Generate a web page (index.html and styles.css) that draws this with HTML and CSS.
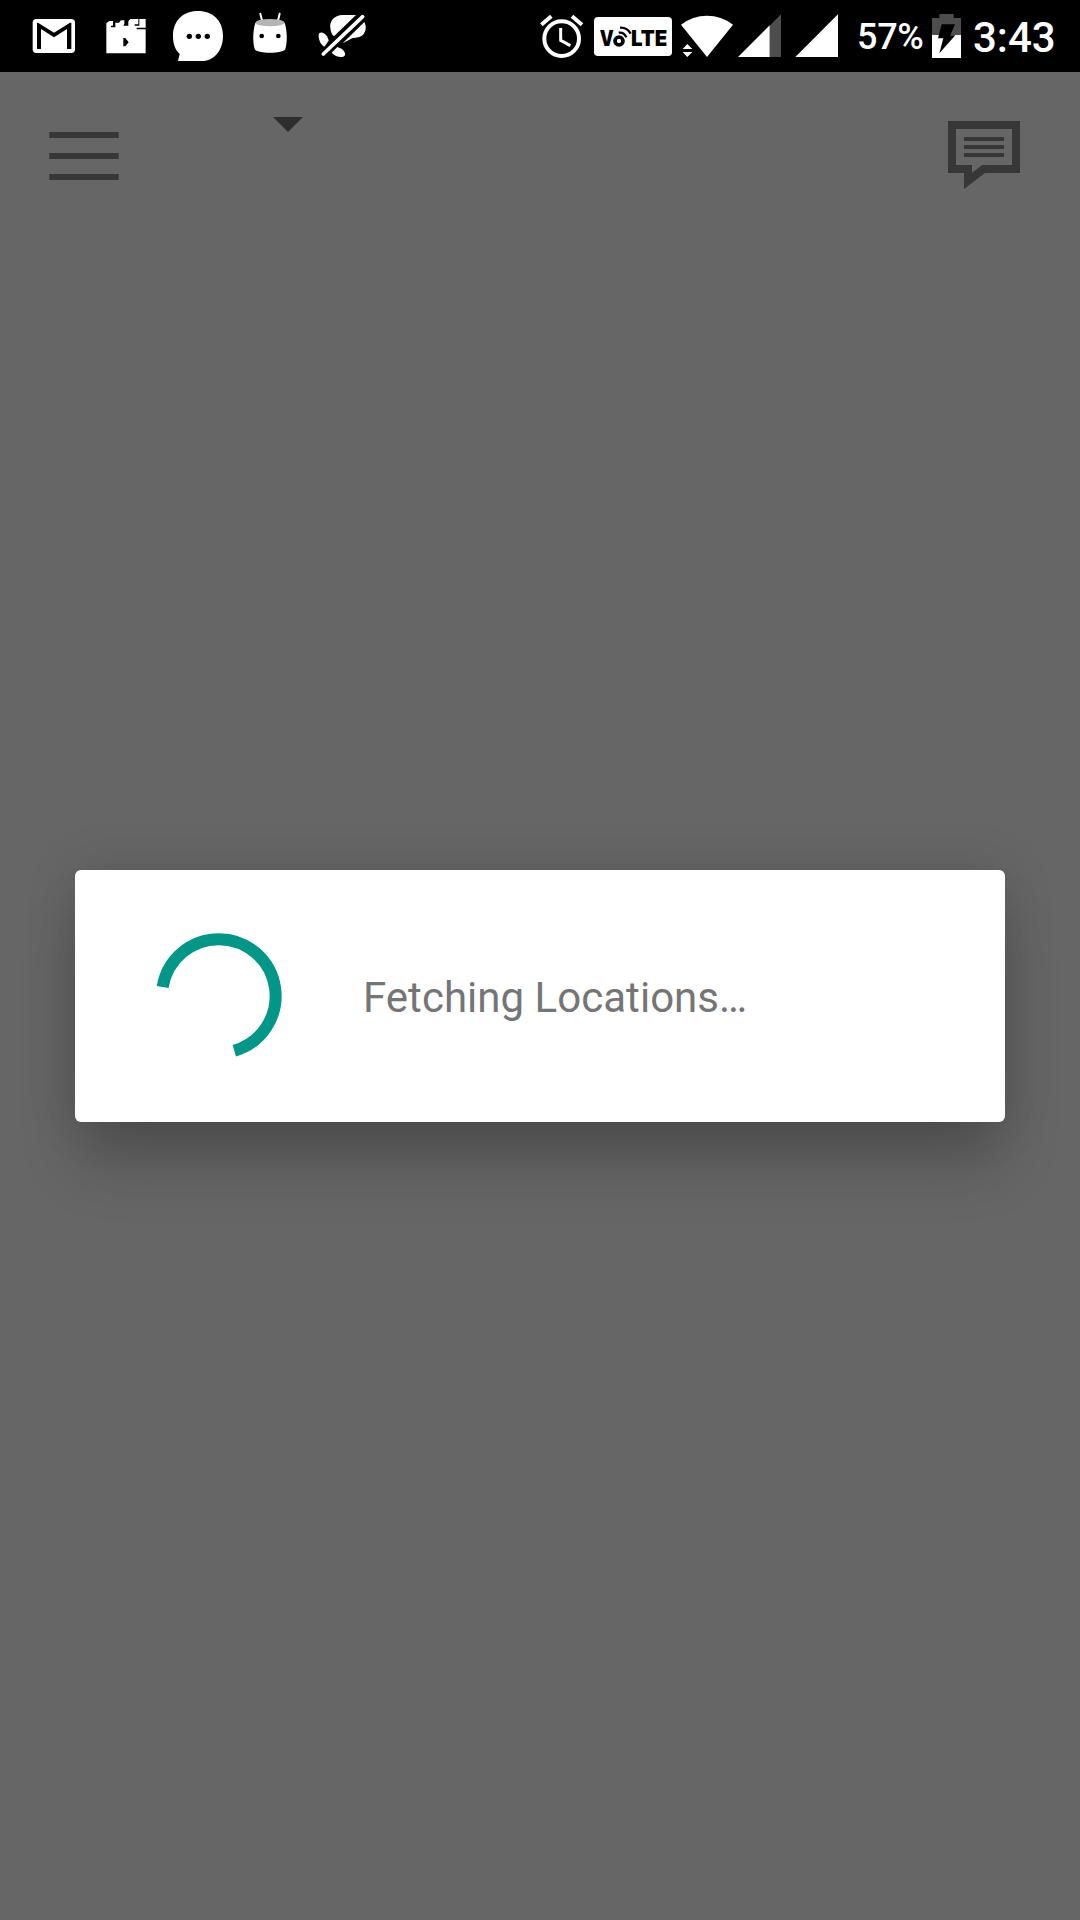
FILE: index.html
```html
<!DOCTYPE html>
<html lang="en">
<head>
<meta charset="utf-8">
<title>Locations</title>
<link rel="stylesheet" href="styles.css">
</head>
<body>
<div class="screen">
  <header class="status-bar">
    <div class="notifications">
      <svg class="notice" viewBox="-6 0 216 216">
        <rect x="38" y="57" width="127" height="102" rx="11" fill="#fff"/>
        <path d="M51 68H54L102 98L150 68H154V147H141V87L102 112L63 87V147H51Z"/>
      </svg>
      <svg class="notice" viewBox="210 0 216 216">
        <path fill="#fff" d="M259 160V70L268 63H279V77H273V82H286V68H297L303 61H313V71L310 77H325V64L331 57H355V73H344V77H358V57H377V83H350V88H377V160Z"/>
        <path d="M310 114H316L326 127L316 139H310Z"/>
      </svg>
      <svg class="notice" viewBox="6 0 216 216">
        <path fill="#fff" d="M54 183L59 162C45 149 39 132 39 108C39 62 69 33 114 33S189 62 189 108S159 183 128 183Z"/>
        <circle cx="88" cy="109" r="8"/><circle cx="115" cy="109" r="8"/><circle cx="142" cy="109" r="8"/>
      </svg>
      <svg class="notice" viewBox="222 0 216 216">
        <path fill="none" stroke="#fff" stroke-width="6" stroke-linecap="round" d="M301 41L307 65M359 41L353 65"/>
        <path fill="#fff" d="M286 68C278 94 278 126 284 147C290 162 370 162 376 147C382 126 382 94 374 68Z"/>
        <ellipse cx="330" cy="68" rx="43" ry="11" fill="#b5b5b5"/>
        <circle cx="305" cy="108" r="7"/><circle cx="355" cy="108" r="7"/>
      </svg>
      <svg class="notice" viewBox="438 0 216 216">
        <path fill="#fff" d="M588 45H548C522 45 508 65 511 84C512 96 516 104 522 109Z"/>
        <path fill="#fff" d="M613 66C619 78 619 91 611 102C603 113 588 113 578 114L548 130Z"/>
        <path fill="#fff" d="M478 99C488 92 504 106 506 122L493 140C479 134 472 107 478 99Z"/>
        <path fill="#fff" d="M515 158L532 141C548 145 559 159 554 167C547 174 526 171 515 158Z"/>
        <path fill="none" stroke="#fff" stroke-width="11" stroke-linecap="round" d="M490 162L608 50"/>
      </svg>
    </div>
    <div class="system">
      <svg class="alarm" viewBox="0 0 180 216">
        <circle cx="95" cy="116" r="52" fill="none" stroke="#fff" stroke-width="12"/>
        <path fill="none" stroke="#fff" stroke-width="12" d="M34 74L64 49M126 49L156 74"/>
        <path fill="none" stroke="#fff" stroke-width="9" d="M92 84V121L121 137"/>
      </svg>
      <svg class="volte" viewBox="180 0 255 216">
        <rect x="192" y="51" width="234" height="117" rx="12" fill="#fff"/>
        <text class="volte-text" x="209" y="138" textLength="42" lengthAdjust="spacingAndGlyphs">V</text>
        <circle cx="267" cy="123" r="12" fill="none" stroke="#000" stroke-width="11"/>
        <path fill="none" stroke="#000" stroke-width="7" d="M266 98Q282 96 289 112M270 83Q292 82 302 101"/>
        <text class="volte-text" x="303" y="138" textLength="109" lengthAdjust="spacingAndGlyphs">LTE</text>
      </svg>
      <svg class="wifi" viewBox="435 0 180 216">
        <path fill="#fff" d="M453 74Q488 47 531 47T609 74L531 171Z"/>
        <path fill="#fff" d="M458 147L472 132L487 147ZM458 156H487L472 171Z"/>
      </svg>
      <svg class="signal" viewBox="45 0 165 216">
        <path fill="#4d4d4d" d="M149 77L183 43V171H149Z"/>
        <path fill="#fff" d="M54 171L149 76V171Z"/>
      </svg>
      <svg class="signal" viewBox="210 0 165 216">
        <path fill="#fff" d="M226 171L354 43V171Z"/>
      </svg>
      <span class="percent">57%</span>
      <svg class="battery" viewBox="225 0 120 216">
        <path fill="#4d4d4d" d="M246 105V54H268V42H311V54H333V105Z"/>
        <path fill="#fff" d="M246 105H333V174H246Z"/>
        <path d="M275 73H315L301 106H316L268 160L280 115H264Z"/>
      </svg>
      <span class="clock">3:43</span>
    </div>
  </header>

  <nav class="toolbar">
    <svg class="menu" viewBox="0 0 216 150">
      <path fill="#373737" d="M4 3H212V21H4ZM4 66H212V84H4ZM4 129H212V147H4Z"/>
    </svg>
    <svg class="dropdown" viewBox="0 0 90 45"><path fill="#2e2e2e" d="M0 0H90L45 45Z"/></svg>
    <svg class="messages" viewBox="54 63 216 204">
      <path fill="#373737" fill-rule="evenodd" d="M54 63H270V219H165L102 267V219H54ZM78 87V195H126V218L157 195H246V87Z"/>
      <path fill="#373737" d="M102 111H222V123H102ZM102 135H222V147H102ZM102 159H222V171H102Z"/>
    </svg>
  </nav>

  <main class="content">
    <section class="dialog" role="dialog">
      <svg class="spinner" viewBox="0 0 480 510">
        <path fill="none" stroke="#009688" stroke-width="36" d="M68 231A170.500 170.500 0 1 1 283 422"/>
      </svg>
      <p class="message">Fetching Locations…</p>
    </section>
  </main>
</div>
</body>
</html>
```
FILE: styles.css
```css
* { box-sizing: border-box; }
body { margin: 0; background: #666; font-family: Roboto, sans-serif; }
svg { display: block; flex: none; }
.screen { display: flex; flex-direction: column; width: 1080px; height: 1920px; overflow: hidden; background: #666; }

.status-bar { display: flex; justify-content: space-between; height: 72px; padding: 0 26px 0 18px; background: #000; color: #fff; }
.notifications, .system { display: flex; height: 72px; }
.notice { width: 72px; height: 72px; }
.alarm, .wifi { width: 60px; height: 72px; }
.volte { width: 85px; height: 72px; }
.volte-text { font: 900 66px Inter, sans-serif; }
.signal { width: 55px; height: 72px; }
.percent { width: 80px; padding-left: 12px; font-size: 36px; font-weight: 500; letter-spacing: -.3px; line-height: 75px; white-space: nowrap; }
.battery { width: 40px; height: 72px; }
.clock { width: 89px; padding-left: 8px; font-size: 42px; font-weight: 500; line-height: 75px; white-space: nowrap; }

.toolbar { display: flex; align-items: flex-start; height: 168px; padding: 45px 60px 0 48px; }
.menu { width: 72px; height: 50px; margin-top: 14px; }
.dropdown { width: 30px; height: 15px; margin-left: 153px; }
.messages { width: 72px; height: 68px; margin: 4px 0 0 auto; }

.content { padding: 630px 75px 0; }
.dialog { display: flex; align-items: center; height: 252px; padding-left: 65px; border-radius: 6px; background: #fff; box-shadow: 0 46px 60px -4px rgba(0, 0, 0, .2), 0 0 52px rgba(0, 0, 0, .13); }
.spinner { width: 160px; height: 170px; margin-top: -2px; }
.message { margin: 3px 0 0 63px; color: #757575; font-size: 42px; letter-spacing: .03px; line-height: 50px; white-space: nowrap; }
```
